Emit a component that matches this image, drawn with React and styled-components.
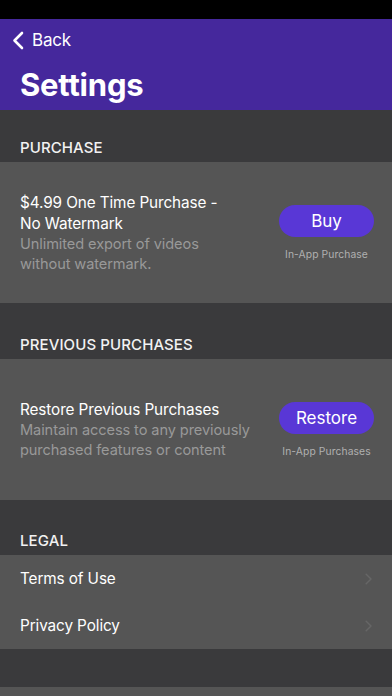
import React from 'react';
import styled, { createGlobalStyle } from 'styled-components';

const GlobalStyle = createGlobalStyle`
  html, body {
    margin: 0;
    padding: 0;
    background: #3a3a3c;
  }
  body {
    font-family: Inter, "Liberation Sans", Arial, sans-serif;
    -webkit-font-smoothing: antialiased;
  }
`;

const Screen = styled.div`
  width: 392px;
  height: 696px;
  overflow: hidden;
  display: flex;
  flex-direction: column;
  background: #3a3a3c;
`;

const StatusBar = styled.div`
  height: 19px;
  background: #000;
  flex-shrink: 0;
`;

const Header = styled.header`
  background: #45289c;
  height: 91px;
  flex-shrink: 0;
  display: flex;
  flex-direction: column;
  padding: 0 20px 0 12px;
  box-sizing: border-box;
`;

const BackButton = styled.div`
  display: flex;
  align-items: center;
  gap: 8px;
  height: 42px;
  color: #fff;
  font-size: 17px;
  letter-spacing: -0.2px;
`;

const Title = styled.h1`
  margin: 4px 0 0;
  padding-left: 8px;
  color: #fff;
  font-size: 31px;
  font-weight: 700;
  letter-spacing: -0.2px;
  line-height: 40px;
`;

const SectionHeader = styled.div`
  height: ${(p) => p.$height}px;
  display: flex;
  align-items: flex-end;
  padding: 0 20px 5px;
  box-sizing: border-box;
  color: #f2f2f2;
  font-size: 15px;
  font-weight: 500;
  letter-spacing: 0.1px;
  flex-shrink: 0;
`;

const Card = styled.div`
  background: #555555;
  flex-shrink: 0;
`;

const PurchaseRow = styled.div`
  height: 141px;
  display: flex;
  align-items: center;
  padding: 0 18px 0 20px;
  box-sizing: border-box;
  gap: 12px;
`;

const RowText = styled.div`
  flex: 1;
  min-width: 0;
`;

const RowTitle = styled.div`
  color: #fff;
  font-size: 15.3px;
  line-height: 21px;
  letter-spacing: -0.1px;
`;

const RowSub = styled.div`
  color: #999999;
  font-size: 14.6px;
  line-height: 20px;
  letter-spacing: -0.1px;
`;

const Action = styled.div`
  width: 95px;
  display: flex;
  flex-direction: column;
  align-items: center;
  gap: 11px;
  margin-top: ${(p) => p.$offset}px;
`;

const PillButton = styled.button`
  width: 95px;
  height: 32px;
  border: none;
  border-radius: 16px;
  background: #5937d6;
  color: #fff;
  font-family: inherit;
  font-size: 17px;
  padding: 0;
`;

const ActionCaption = styled.div`
  color: #b0b0b0;
  font-size: 10.3px;
  letter-spacing: 0.1px;
  white-space: nowrap;
`;

const LinkRow = styled.div`
  height: 47px;
  display: flex;
  align-items: center;
  justify-content: space-between;
  padding: 0 20px;
  color: #fff;
  font-size: 15.3px;
  letter-spacing: -0.1px;
`;

const Gap = styled.div`
  height: ${(p) => p.$height}px;
  flex-shrink: 0;
`;

const Chevron = ({ size = 12, color, width = 2.5 }) => (
  <svg width={size * 0.6} height={size} viewBox="0 0 6 10" fill="none">
    <path d="M1 1l4 4-4 4" stroke={color} strokeWidth={width * 0.5} strokeLinecap="round" strokeLinejoin="round" />
  </svg>
);

const BackChevron = () => (
  <svg width="12" height="19" viewBox="0 0 12 19" fill="none">
    <path d="M10 2L2.5 9.5 10 17" stroke="#fff" strokeWidth="2.6" strokeLinecap="round" strokeLinejoin="round" />
  </svg>
);

const App = () => {
  return (
    <Screen>
      <GlobalStyle />
      <StatusBar />
      <Header>
        <BackButton>
          <BackChevron />
          Back
        </BackButton>
        <Title>Settings</Title>
      </Header>

      <SectionHeader $height={52}>PURCHASE</SectionHeader>
      <Card>
        <PurchaseRow>
          <RowText>
            <RowTitle>$4.99 One Time Purchase -<br />No Watermark</RowTitle>
            <RowSub>Unlimited export of videos<br />without watermark.</RowSub>
          </RowText>
          <Action $offset={0}>
            <PillButton>Buy</PillButton>
            <ActionCaption>In-App Purchase</ActionCaption>
          </Action>
        </PurchaseRow>
      </Card>

      <SectionHeader $height={56}>PREVIOUS PURCHASES</SectionHeader>
      <Card>
        <PurchaseRow>
          <RowText>
            <RowTitle>Restore Previous Purchases</RowTitle>
            <RowSub>Maintain access to any previously<br />purchased features or content</RowSub>
          </RowText>
          <Action $offset={0}>
            <PillButton>Restore</PillButton>
            <ActionCaption>In-App Purchases</ActionCaption>
          </Action>
        </PurchaseRow>
      </Card>

      <SectionHeader $height={55}>LEGAL</SectionHeader>
      <Card>
        <LinkRow>
          Terms of Use
          <Chevron size={12} color="#666" />
        </LinkRow>
        <LinkRow>
          Privacy Policy
          <Chevron size={12} color="#666" />
        </LinkRow>
      </Card>

      <Gap $height={38} />
      <Card style={{ flex: 1 }} />
    </Screen>
  );
};

export default App;
